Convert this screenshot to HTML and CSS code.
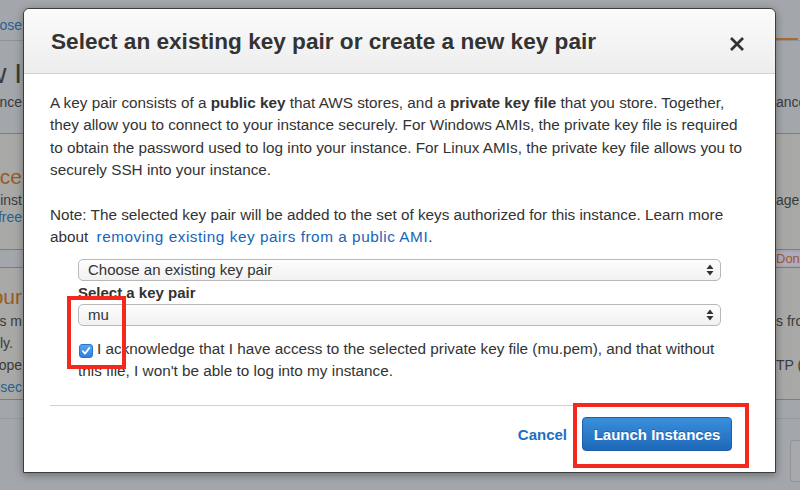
FILE: index.html
```html
<!DOCTYPE html>
<html>
<head>
<meta charset="utf-8">
<link rel="stylesheet" href="styles.css">
</head>
<body>
<div class="page">
  <div class="band topbar">
    <span class="frag blue">Choose</span>
    <span class="tabline"></span>
  </div>
  <div class="band headband">
    <div class="row"><span class="frag big">Review I</span><span></span></div>
    <div class="row"><span class="frag">Instance</span><span class="rfrag">ance</span></div>
  </div>
  <div class="band box box1">
    <div class="row r1"><span class="frag orange lg">Instance</span><span></span></div>
    <div class="row r2"><span class="frag">inst</span><span class="rfrag">age</span></div>
    <div class="row r3"><span class="frag blue">free</span><span></span></div>
  </div>
  <div class="band gapband">
    <span></span><span class="rfrag dont">Don't</span>
  </div>
  <div class="band box box2">
    <div class="row r1"><span class="frag orange lg">your</span><span></span></div>
    <div class="row r2"><span class="frag">is m</span><span class="rfrag">s fro</span></div>
    <div class="row r3"><span class="frag start">ly.</span><span></span></div>
    <div class="row r4"><span class="frag">ope</span><span class="rfrag">TP (</span></div>
    <div class="row r5"><span class="frag blue">sec</span><span></span></div>
  </div>
  <div class="band bottom">
    <span></span><span class="ghostbtn"></span>
  </div>
</div>

<div class="modal">
  <div class="modal-header">
    <h1 class="title">Select an existing key pair or create a new key pair</h1>
    <svg class="close" width="16" height="16" viewBox="0 0 16 16"><path d="M2 2 L14 14 M14 2 L2 14" stroke="#333" stroke-width="2.8" stroke-linecap="butt"/></svg>
  </div>
  <div class="modal-body">
    <p class="para">A key pair consists of a <b>public key</b> that AWS stores, and a <b>private key file</b> that you store. Together, they allow you to connect to your instance securely. For Windows AMIs, the private key file is required to obtain the password used to log into your instance. For Linux AMIs, the private key file allows you to securely SSH into your instance.</p>
    <p class="para note">Note: The selected key pair will be added to the set of keys authorized for this instance. Learn more about <a class="link">removing existing key pairs from a public AMI</a>.</p>
    <div class="form">
      <div class="select">
        <span>Choose an existing key pair</span>
        <svg class="arrows" width="8" height="12" viewBox="0 0 8 12"><path d="M4 0.5 L7.5 5 L0.5 5 Z M0.5 7 L7.5 7 L4 11.5 Z" fill="#333"/></svg>
      </div>
      <div class="label">Select a key pair</div>
      <div class="select sel2">
        <span>mu</span>
        <svg class="arrows" width="8" height="12" viewBox="0 0 8 12"><path d="M4 0.5 L7.5 5 L0.5 5 Z M0.5 7 L7.5 7 L4 11.5 Z" fill="#333"/></svg>
      </div>
      <div class="ack">
        <span class="checkbox"><svg width="10" height="10" viewBox="0 0 10 10"><path d="M1.8 5.2 L4 7.6 L8.3 2" stroke="#fff" stroke-width="1.8" fill="none" stroke-linecap="round" stroke-linejoin="round"/></svg></span>I acknowledge that I have access to the selected private key file (mu.pem), and that without this file, I won't be able to log into my instance.
      </div>
    </div>
  </div>
  <div class="modal-footer">
    <a class="cancel">Cancel</a>
    <button class="launch">Launch Instances</button>
  </div>
  <div class="annot annot1"></div>
  <div class="annot annot2"></div>
</div>
</body>
</html>
```

FILE: styles.css
```css
* { box-sizing: border-box; }
html, body { margin: 0; padding: 0; }
body {
  width: 800px;
  height: 490px;
  overflow: hidden;
  background: #a3a6aa;
  font-family: "Liberation Sans", Arial, sans-serif;
  color: #3a3b3c;
  position: relative;
}

/* background page (dimmed) */
.page { width: 800px; height: 490px; display: flex; flex-direction: column; }
.band { display: flex; justify-content: space-between; }
.row { display: flex; justify-content: space-between; }
.frag { width: 22px; overflow: hidden; white-space: nowrap; display: flex; justify-content: flex-end; font-size: 14px; }
.frag.start { justify-content: flex-start; }
.rfrag { width: 24px; overflow: hidden; white-space: nowrap; font-size: 14px; }
.blue { color: #2a5f94; }
.orange { color: #9a5a24; }
.topbar { height: 41px; border-bottom: 1px solid #8f9297; align-items: flex-start; }
.topbar .frag { margin-top: 17px; font-size: 14px; }
.tabline { width: 22px; height: 40px; border-bottom: 2px solid #a86a30; margin-right: 2px; }
.headband { height: 93px; flex-direction: column; justify-content: flex-start; border-bottom: 1px solid #a0744c; }
.headband .big { font-size: 28px; margin-top: 17px; line-height: 32px; }
.headband .row:nth-child(2) { margin-top: 4px; }
.box { background: #a8a9a6; flex-direction: column; justify-content: flex-start; }
.box1 { height: 116px; border-bottom: 1px solid #a0744c; }
.box1 .r1 { margin-top: 30px; }
.box1 .lg { font-size: 21px; line-height: 26px; }
.box1 .r2 { margin-top: 2px; }
.box1 .r3 { margin-top: 1px; }
.gapband { height: 18px; align-items: center; border-bottom: 1px solid #a0744c; }
.dont { color: #9a5a24; background: #aeabc0; font-size: 13px; line-height: 14px; }
.box2 { height: 132px; border-bottom: 1px solid #a0744c; }
.box2 .r1 { margin-top: 16px; }
.box2 .lg { font-size: 21px; line-height: 26px; }
.box2 .row { line-height: 22px; }
.bottom { flex: 1; border-top: 1px solid #979a9e; margin-top: 18px; align-items: flex-start; }
.ghostbtn { width: 10px; height: 42px; border: 1px solid #8f9297; border-right: none; border-radius: 4px 0 0 4px; margin-top: 21px; background: #a7a9ad; }

/* modal */
.modal {
  position: absolute;
  left: 23px;
  top: 8px;
  width: 753px;
  height: 465px;
  background: #fff;
  border: 1px solid #3d3d3d;
  border-radius: 6px 6px 0 0;
  box-shadow: 0 2px 8px rgba(0,0,0,0.35);
  display: flex;
  flex-direction: column;
  color: #333;
}
.modal-header {
  height: 65px;
  flex: none;
  background: linear-gradient(#fbfbfb, #ededed);
  border-bottom: 1px solid #d4d4d4;
  border-radius: 6px 6px 0 0;
  display: flex;
  align-items: center;
  justify-content: space-between;
  padding: 0 30px 0 27px;
}
.title { margin: 0; font-size: 22.6px; font-weight: bold; color: #333; padding-top: 2px; }
.close { margin-top: 6px; }

.modal-body { padding: 18px 26px 0 26px; font-size: 15.3px; line-height: 22.4px; }
.para { margin: 0 0 22px 0; }
.note { margin-bottom: 0; }
.link { color: #1565b8; margin-left: 4px; letter-spacing: 0.55px; }
.form { padding-left: 28px; }
.select {
  margin-top: 11px;
  height: 22px;
  width: 643px;
  border: 1px solid #b8b8b8;
  border-radius: 5px;
  background: linear-gradient(#fdfdfd, #f1f1f1);
  display: flex;
  align-items: center;
  justify-content: space-between;
  padding: 0 6px 0 9px;
  font-size: 15px;
  line-height: 20px;
}
.arrows { flex: none; }
.label { font-weight: bold; font-size: 15px; line-height: 18px; margin-top: 3px; }
.sel2 { margin-top: 2px; }
.ack { margin-top: 12px; line-height: 22px; font-size: 15.3px; padding-right: 30px; }
.checkbox {
  display: inline-flex;
  align-items: center;
  justify-content: center;
  width: 14px;
  height: 14px;
  border-radius: 3px;
  background: linear-gradient(#5aa6f2, #2d7fe0);
  border: 1px solid #2a74cc;
  vertical-align: -2px;
  margin: 0 4px 0 1px;
}

.modal-footer {
  margin: auto 26px 0 26px;
  border-top: 1px solid #cfcfcf;
  padding: 11px 17px 21px 0;
  display: flex;
  justify-content: flex-end;
  align-items: center;
  gap: 15px;
}
.cancel { color: #1a6fc4; font-weight: bold; font-size: 15px; }
.launch {
  height: 34px;
  width: 150px;
  border: 1px solid #1c5fa8;
  border-radius: 4px;
  background: linear-gradient(#3a8fdc, #1d68b8);
  color: #fff;
  font-family: "Liberation Sans", Arial, sans-serif;
  font-weight: bold;
  font-size: 15px;
  text-shadow: 0 -1px 0 rgba(0,0,0,0.25);
  padding: 0;
}

.annot { position: absolute; border: 4px solid #f4281c; }
.annot1 { left: 43px; top: 287px; width: 59px; height: 73px; }
.annot2 { left: 549px; top: 394px; width: 176px; height: 65px; }
```
